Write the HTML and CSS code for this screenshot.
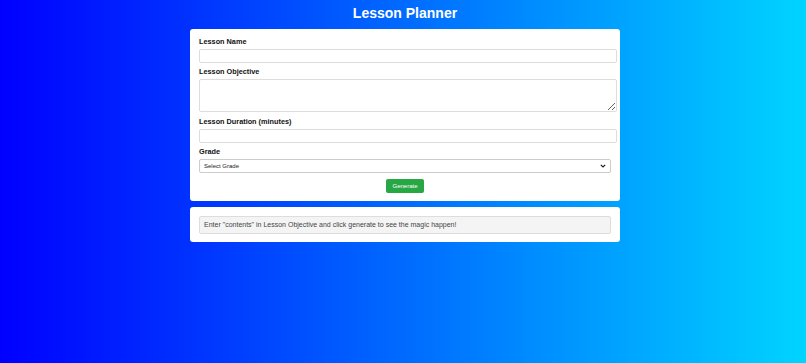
FILE: index.html
```html
<!DOCTYPE html>
<html lang="en">
<head>
  <meta charset="UTF-8">
  <meta name="viewport" content="width=device-width, initial-scale=1.0">
  <title>Lesson Planner</title>
  <link rel="stylesheet" href="styles.css">
</head>
<body>
  <h1>Lesson Planner</h1>

  <div class="card">
    <label for="name">Lesson Name</label>
    <input type="text" id="name">

    <label for="objective">Lesson Objective</label>
    <textarea id="objective"></textarea>

    <label for="duration">Lesson Duration (minutes)</label>
    <input type="number" id="duration">

    <label for="grade">Grade</label>
    <select id="grade">
      <option>Select Grade</option>
      <option>Grade 1</option>
      <option>Grade 2</option>
      <option>Grade 3</option>
    </select>

    <div class="actions">
      <button class="generate">Generate</button>
    </div>
  </div>

  <div class="card">
    <div class="output">Enter "contents" in Lesson Objective and click generate to see the magic happen!</div>
  </div>
</body>
</html>
```

FILE: styles.css
```css
body { font-family: "Liberation Sans", Arial, sans-serif; margin: 0; padding: 5px 0 20px 4px; min-height: 100vh; box-sizing: border-box; background: linear-gradient(to right, #0000ff, #00d4ff); }
h1 { color: white; font-size: 14px; text-align: center; margin: 0 0 8px; line-height: 16px; }
.card { background: white; width: 430px; box-sizing: border-box; margin: 0 auto 6px; padding: 9px 9px 8px; border-radius: 3px; }
label { display: block; font-size: 7.3px; font-weight: bold; line-height: 8px; margin-bottom: 3px; color: #111; }
input, textarea { display: block; width: 100%; padding: 2px; border: 1px solid #ddd; border-radius: 2px; font-size: 7px; line-height: 8px; margin: 0 0 5px; font-family: inherit; }
input { height: 8px; }
textarea { height: 27px; margin-bottom: 6px; }
select { display: block; width: 100%; height: 14px; font-size: 6px; color: #222; border: 1px solid #ccc; border-radius: 2px; margin: 0 0 6px; padding: 0 4px; font-family: inherit; appearance: none; background: white url("data:image/svg+xml,%3Csvg xmlns='http://www.w3.org/2000/svg' width='6' height='4' viewBox='0 0 6 4'%3E%3Cpath d='M0.8 0.8 L3 3 L5.2 0.8' fill='none' stroke='%23222' stroke-width='1.2'/%3E%3C/svg%3E") no-repeat right 4px center; }
.actions { display: flex; justify-content: center; }
.generate { background: #28a745; color: white; border: none; border-radius: 2px; font-size: 6px; line-height: 8px; padding: 3px 6px; font-family: inherit; }
.output { background: #f4f4f4; border: 1px solid #ddd; border-radius: 2px; padding: 4px; font-size: 7px; line-height: 8px; color: #444; }
```
